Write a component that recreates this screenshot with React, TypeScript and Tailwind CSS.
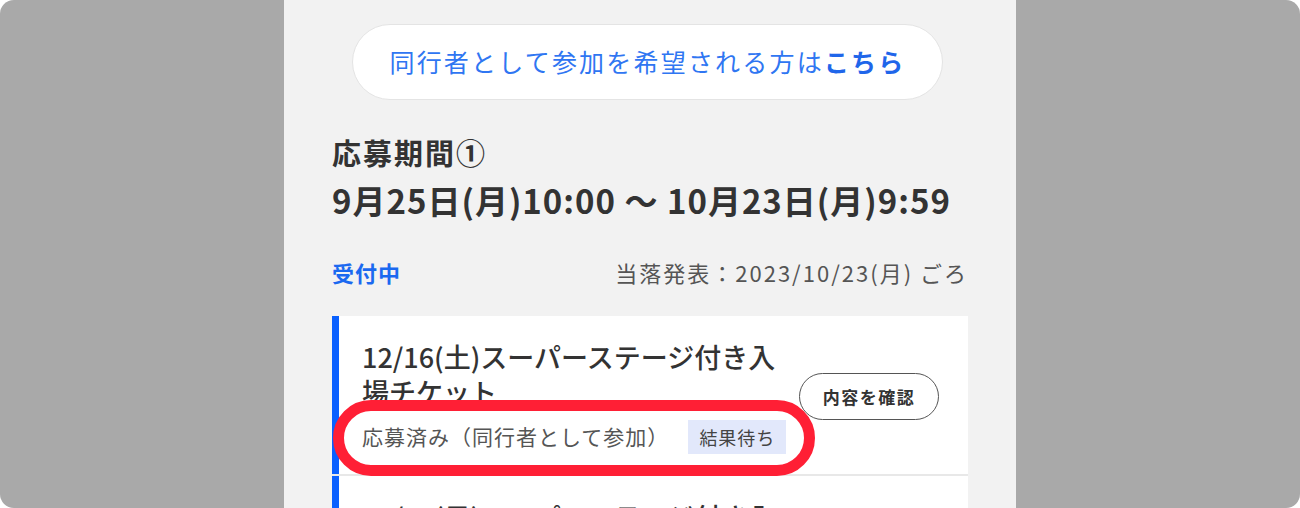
// 応募ページの一部：同行者リンク、応募期間、チケット一覧（ハイライト付き）
import React from 'react';

type Ticket = { title: string; status: string; tag: string; highlight?: boolean };

const TICKETS: Ticket[] = [
  { title: '12/16(土)スーパーステージ付き入場チケット', status: '応募済み（同行者として参加）', tag: '結果待ち', highlight: true },
  { title: '12/17(日)スーパーステージ付き入場チケット', status: '応募済み（同行者として参加）', tag: '結果待ち' },
];

function TicketCard({ t }: { t: Ticket }) {
  return (
    <div className="relative flex items-center border-l-[7px] border-[#0a60ff] bg-white pb-[20px] pl-[23px] pr-[29px] pt-[23px]">
      <div className="min-w-0">
        <div className="w-[425px] text-[27px] font-medium leading-[35px] text-[#333]">{t.title}</div>
        <div className="mt-[11px] flex items-center">
          <span className="text-[21px] tracking-[1px] text-[#555]">{t.status}</span>
          <span className="ml-[19px] flex h-[34px] items-center bg-[#e2e8fb] px-[11px] text-[18px] tracking-[1px] text-[#444]">{t.tag}</span>
        </div>
      </div>
      <button className="ml-auto flex h-[47px] w-[140px] shrink-0 items-center justify-center rounded-full border-[1.5px] border-[#555] text-[17px] font-bold tracking-[1.5px] text-[#333]">
        内容を確認
      </button>
      {t.highlight && (
        <div className="pointer-events-none absolute left-[-6px] top-[84px] z-10 h-[76px] w-[482px] rounded-full border-[11px] border-[#ff1f35]" />
      )}
    </div>
  );
}

export default function App() {
  return (
    <div className="h-[508px] w-[1300px] bg-white font-['Noto_Sans_CJK_JP',sans-serif]">
      <div className="flex h-full justify-center overflow-hidden rounded-[14px] bg-[#a9a9a9]">
        <div className="w-[732px] bg-[#f2f2f2] px-12 pt-6">
          <button className="ml-[20px] flex h-[76px] w-[591px] items-center justify-center rounded-full border border-[#e4e4e4] bg-white text-[25px] tracking-[2.2px] text-[#2f76f2]">
            同行者として参加を希望される方は<span className="font-bold text-[#1f66ea]">こちら</span>
          </button>

          <div className="mt-[32px] text-[29px] font-bold leading-[40px] tracking-[2px] text-[#333]">応募期間①</div>
          <div className="mt-[4px] text-[33px] font-bold leading-[48px] tracking-[1px] text-[#333]">9月25日(月)10:00 〜 10月23日(月)9:59</div>

          <div className="mt-[33px] flex items-center justify-between leading-[30px]">
            <span className="text-[22px] font-bold tracking-[1px] text-[#1b69f0]">受付中</span>
            <span className="text-[22px] tracking-[2px] text-[#555]">当落発表：2023/10/23(月) ごろ</span>
          </div>

          <div className="mt-[29px] flex flex-col gap-[2px] bg-[#e8e8e8]">
            {TICKETS.map(t => <TicketCard key={t.title} t={t} />)}
          </div>
        </div>
      </div>
    </div>
  );
}
